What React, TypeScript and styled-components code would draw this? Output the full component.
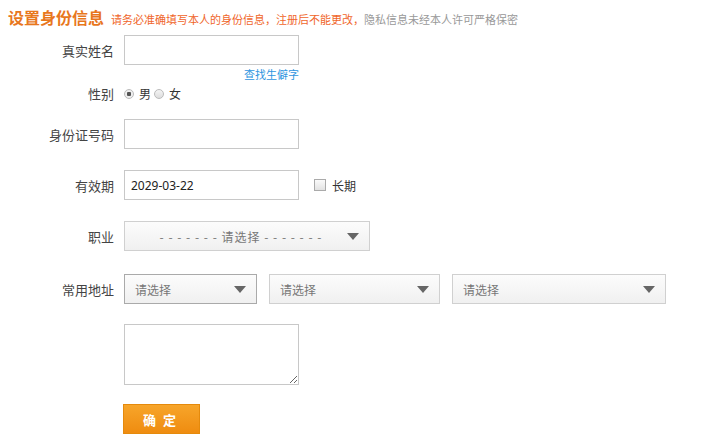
import React from "react";
import styled, { createGlobalStyle } from "styled-components";

const G = createGlobalStyle`
  body { margin: 0; background: #fff; font-family: "Microsoft YaHei", "Noto Sans CJK SC", sans-serif; color: #333; }
`;
const Wrap = styled.div`padding: 7px 8px;`;
const Head = styled.div`display: flex; align-items: baseline; gap: 7px;`;
const Title = styled.h1`margin: 0; font-size: 16px; font-weight: bold; color: #e8771d; line-height: 20px;`;
const Note = styled.span`font-size: 11px; color: #f0662b; span { color: #999; }`;
const Row = styled.div<{ $mt: number }>`
  display: flex; align-items: center; margin-top: ${p => p.$mt}px;
`;
const Label = styled.label`width: 106px; text-align: right; font-size: 13px; color: #444; margin-right: 10px; flex: none;`;
const Input = styled.input<{ $w?: number }>`
  box-sizing: border-box; width: ${p => p.$w ?? 175}px; height: 30px; border: 1px solid #c8c8c8;
  padding: 0 6px; font: 12px "Noto Sans", sans-serif; color: #222; outline: none;
`;
const Link = styled.a`display: block; margin-left: 116px; width: 175px; text-align: right; font-size: 11px; color: #2f95e0; line-height: 14px; margin-top: 2px;`;
const Radio = styled.span<{ $on?: boolean }>`
  width: 10px; height: 10px; border-radius: 50%; border: 1px solid #bbb; box-sizing: border-box;
  background: ${p => p.$on ? "radial-gradient(circle,#555 0 2px,#eee 2.5px)" : "linear-gradient(#f4f4f4,#ddd)"};
  margin-right: 5px; margin-left: 0;
`;
const Opt = styled.span`font-size: 12px; margin-right: 3px;`;
const Check = styled.span`width: 10px; height: 10px; border: 1px solid #aaa; background: linear-gradient(#fafafa,#e2e2e2); margin: 0 6px 0 15px;`;
const Select = styled.div<{ $w: number; $dark?: boolean; $center?: boolean }>`
  box-sizing: border-box; width: ${p => p.$w}px; height: 30px; margin-right: 12px;
  border: 1px solid ${p => p.$dark ? "#aaa" : "#d0d0d0"};
  background: linear-gradient(#fcfcfc, #f0f0f0);
  display: flex; align-items: center; padding: 0 10px 0 10px; font-size: 12px; color: #777;
  span { flex: 1; ${p => p.$center ? "text-align:center; letter-spacing:1px;" : ""} }
`;
const Arrow = styled.i`width: 0; height: 0; border-left: 6px solid transparent; border-right: 6px solid transparent; border-top: 7px solid #666;`;
const Area = styled.textarea`box-sizing: border-box; width: 175px; height: 61px; border: 1px solid #c8c8c8; margin-left: 116px; display: block; resize: both;`;
const Btn = styled.button`
  margin: 19px 0 0 115px; width: 77px; height: 30px; border: 1px solid #e58a0c;
  background: linear-gradient(#f7a52a, #ef8c10); color: #fff; font-size: 13px; font-weight: bold; letter-spacing: 7px; padding-left: 9px;
  font-family: "Noto Sans CJK SC", sans-serif;
`;

export default function App() {
  return (
    <Wrap>
      <G />
      <Head>
        <Title>设置身份信息</Title>
        <Note>请务必准确填写本人的身份信息，注册后不能更改，<span>隐私信息未经本人许可严格保密</span></Note>
      </Head>
      <Row $mt={8}><Label>真实姓名</Label><Input /></Row>
      <Link>查找生僻字</Link>
      <Row $mt={3}><Label>性别</Label><Radio $on /><Opt>男</Opt><Radio /><Opt>女</Opt></Row>
      <Row $mt={16}><Label>身份证号码</Label><Input /></Row>
      <Row $mt={21}><Label>有效期</Label><Input defaultValue="2029-03-22" /><Check /><Opt>长期</Opt></Row>
      <Row $mt={21}><Label>职业</Label><Select $w={246} $center><span>- - - - - - - 请选择 - - - - - - -</span><Arrow /></Select></Row>
      <Row $mt={23}><Label>常用地址</Label>
        <Select $w={133} $dark><span>请选择</span><Arrow /></Select>
        <Select $w={171}><span>请选择</span><Arrow /></Select>
        <Select $w={214}><span>请选择</span><Arrow /></Select>
      </Row>
      <div style={{ height: 20 }} />
      <Area />
      <Btn>确定</Btn>
    </Wrap>
  );
}
